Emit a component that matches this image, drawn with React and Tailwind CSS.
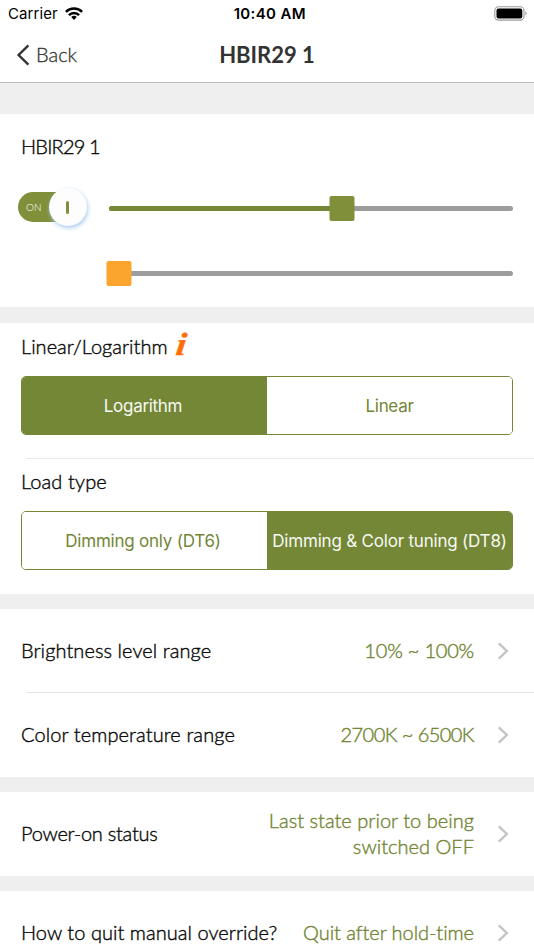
import { useState } from 'react';

const GREEN = 'text-[#728635]';

function StatusBar() {
  return (
    <div className="h-7 pl-[8px] pr-[6.5px] grid grid-cols-3 items-center font-['Inter',sans-serif] text-[15px] text-black">
      <div className="flex items-center gap-[7px]">
        <span className="tracking-[0.08px]">Carrier</span>
        <svg className="-mt-[2px]" width="18" height="13" viewBox="0 0 18 13" fill="none" stroke="#000" strokeWidth="2.5">
          <path d="M0.9 4.9 A11.4 11.4 0 0 1 17.1 4.9" />
          <path d="M3.9 8.2 A7.1 7.1 0 0 1 14.1 8.2" />
          <path d="M9 12.9 L6.2 10.1 A4 4 0 0 1 11.8 10.1 Z" fill="#000" stroke="none" />
        </svg>
      </div>
      <span className="text-center font-semibold whitespace-nowrap pl-[4px] tracking-[0.35px]">10:40 AM</span>
      <svg className="justify-self-end -mt-px" width="34" height="15" viewBox="0 0 34 15">
        <rect x="0.8" y="0.7" width="29.2" height="13.4" rx="3.8" fill="none" stroke="#9a9a9a" strokeWidth="1.1" />
        <rect x="2.5" y="2.4" width="25.8" height="10" rx="2" fill="#000" />
        <path d="M31.4 5.2 A2.6 2.6 0 0 1 31.4 9.6 Z" fill="#9a9a9a" />
      </svg>
    </div>
  );
}

function NavBar({ title }) {
  return (
    <div className="h-[55px] border-b border-[#bcbcbc] pl-[16px] pr-[16px] pb-px grid grid-cols-[1fr_auto_1fr] items-center text-[#333]">
      <button type="button" className="flex items-center gap-[6px]">
        <svg width="14" height="22" viewBox="0 0 14 22" fill="none" stroke="#333" strokeWidth="2.4">
          <path d="M12.4 1.4 L2.6 11 L12.4 20.6" />
        </svg>
        <span className="-mt-[2px] text-[20px] font-light tracking-[0px] [-webkit-text-stroke:0.3px] text-[#333]">Back</span>
      </button>
      <h1 className="text-[22px] font-bold tracking-[0px] leading-none">{title}</h1>
    </div>
  );
}

function Toggle({ on, onChange }) {
  return (
    <button
      type="button"
      onClick={onChange}
      className="relative w-[70px] h-[30px] flex items-center"
    >
      <span className="w-[60px] h-[30px] rounded-full bg-[#7f8f3a] flex items-center pl-[8px] text-[10px] font-light text-white">
        {on ? 'ON' : 'OFF'}
      </span>
      <span className="absolute left-[31px] -top-[4px] size-[38px] rounded-full bg-[#fdfdfd] shadow-[1px_2px_4px_#a9cbee] flex items-center justify-center">
        <span className="w-[3px] h-[13px] rounded-full bg-[#7f8f3a] -translate-x-px" />
      </span>
    </button>
  );
}

function Slider({ value, thumb }) {
  return (
    <div className="relative flex-1 h-[25px] flex items-center">
      <div className="w-full h-[5px] rounded-full bg-[#9d9d9d] overflow-hidden">
        <div className="h-full bg-[#738737]" style={{ width: `${value}%` }} />
      </div>
      <div
        className={`absolute top-0 size-[25px] -translate-x-1/2 rounded-[2px] ${thumb}`}
        style={{ left: `${value}%` }}
      />
    </div>
  );
}

function Segmented({ options, selected, onSelect }) {
  return (
    <div className="h-[59px] rounded-[5px] border border-[#738737] grid grid-cols-2 overflow-hidden font-['Inter',sans-serif] text-[17px]">
      {options.map((option) => (
        <button
          key={option.label}
          type="button"
          onClick={() => onSelect(option.label)}
          className={`whitespace-nowrap flex items-center justify-center pt-[2px] ${option.className} ${
            selected === option.label ? 'bg-[#738737] text-[#f7f8f2]' : `bg-white ${GREEN}`
          }`}
        >
          {option.label}
        </button>
      ))}
    </div>
  );
}

function Row({ label, labelClass, value, valueClass }) {
  return (
    <div className="h-[84px] pl-[21px] pr-[25px] flex items-center shrink-0">
      <span className={`-mt-[2px] whitespace-nowrap ${labelClass}`}>{label}</span>
      <span className={`-mt-[2px] ml-auto text-right whitespace-pre-line leading-[26px] ${GREEN} ${valueClass}`}>
        {value}
      </span>
      <svg className="ml-[23px]" width="12" height="18" viewBox="0 0 12 18" fill="none" stroke="#c3c3c8" strokeWidth="2.4">
        <path d="M1.8 1.4 L9.8 9 L1.8 16.6" />
      </svg>
    </div>
  );
}

export default function App() {
  const [on, setOn] = useState(true);
  const [curve, setCurve] = useState('Logarithm');
  const [loadType, setLoadType] = useState('Dimming & Color tuning (DT8)');

  return (
    <div className="w-[534px] h-[950px] overflow-hidden bg-[#efefef] flex flex-col font-['Lato',sans-serif] text-[20px] text-[#0a0a0a]">
      <header className="bg-white shrink-0">
        <StatusBar />
        <NavBar title="HBIR29 1" />
      </header>

      <main className="font-light [-webkit-text-stroke:0.4px]">
        {/* Brightness and colour sliders */}
        <section className="mt-[31px] h-[193px] bg-white px-[21px] pt-[17px]">
          <h2 className="leading-[30px] tracking-[-0.8px]">HBIR29 1</h2>
          <div className="mt-[31px] -ml-[3px] flex items-center gap-[21px] [-webkit-text-stroke:0px]">
            <Toggle on={on} onChange={() => setOn((v) => !v)} />
            <div className="flex-1 flex pt-[2px]">
              <Slider value={57.7} thumb="bg-[#7f8f3a]" />
            </div>
          </div>
          <div className="mt-[39px] pl-[88px] flex">
            <Slider value={2.5} thumb="bg-[#fba52f]" />
          </div>
        </section>

        {/* Dimming curve and load type */}
        <section className="mt-[16px] h-[271px] bg-white">
          <div className="px-[21px] h-[135px]">
            <div className="h-[53px] flex items-start">
              <h2 className="pt-[8px] leading-[30px] tracking-[0.02px]">Linear/Logarithm</h2>
              <span className="ml-[9px] mt-[5px] scale-x-115 -skew-x-6 font-['Liberation_Serif',serif] font-bold italic text-[32px] leading-[32px] text-[#ff6d05]">i</span>
            </div>
            <div className="font-normal [-webkit-text-stroke:0px]">
              <Segmented
                options={[
                  { label: 'Logarithm', className: 'tracking-[-0.3px] pr-[3px]' },
                  { label: 'Linear', className: 'tracking-[-0.3px]' },
                ]}
                selected={curve}
                onSelect={setCurve}
              />
            </div>
          </div>
          <div className="ml-[26px] h-px bg-[#e9e9e9]" />
          <div className="px-[21px]">
            <h2 className="h-[52px] pt-[7px] leading-[30px] tracking-[0.12px]">Load type</h2>
            <div className="font-normal [-webkit-text-stroke:0px]">
              <Segmented
                options={[
                  { label: 'Dimming only (DT6)', className: 'tracking-[-0.22px] pr-[3px]' },
                  { label: 'Dimming & Color tuning (DT8)', className: 'tracking-[-0.2px]' },
                ]}
                selected={loadType}
                onSelect={setLoadType}
              />
            </div>
          </div>
        </section>

        <section className="mt-[15px] bg-white h-[168px]">
          <Row label="Brightness level range" labelClass="tracking-[0.08px]" value="10% ~ 100%" valueClass="tracking-[-0.2px]" />
          <div className="ml-[26px] -mt-px h-px bg-[#e6e6e6]" />
          <Row label="Color temperature range" labelClass="tracking-[0.1px]" value="2700K ~ 6500K" valueClass="tracking-[-0.55px]" />
        </section>

        <section className="mt-[15px] bg-white">
          <Row label="Power-on status" labelClass="tracking-[-0.25px]" value={'Last state prior to being\nswitched OFF'} valueClass="tracking-[0.03px]" />
        </section>

        <section className="mt-[15px] bg-white">
          <Row label="How to quit manual override?" labelClass="tracking-[0.05px]" value="Quit after hold-time" valueClass="tracking-[-0.05px]" />
        </section>
      </main>
    </div>
  );
}
